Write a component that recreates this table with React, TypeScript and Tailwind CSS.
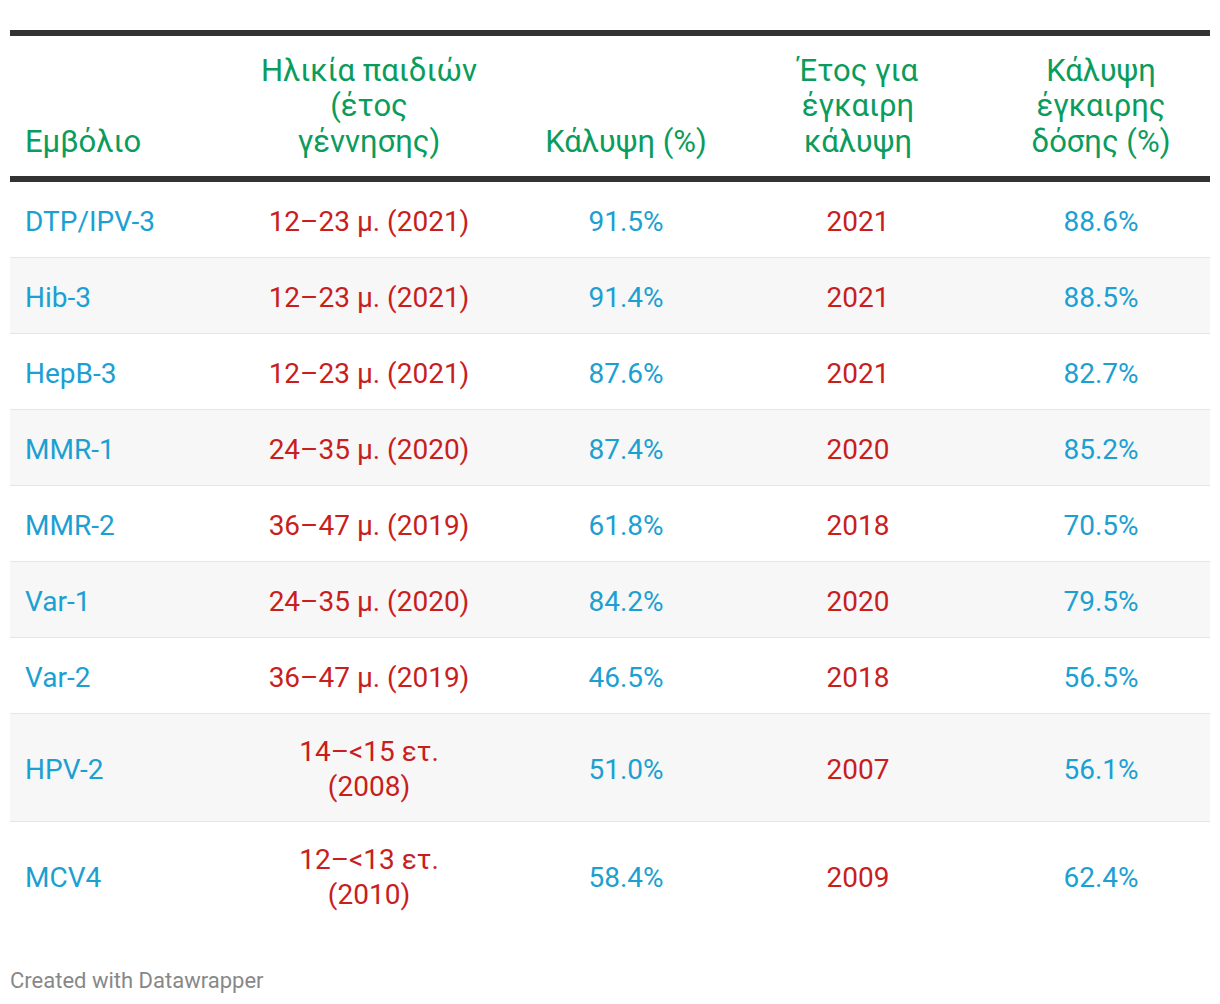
import React from "react";

type Row = {
  v: string;
  age: React.ReactNode;
  cov: string;
  year: string;
  tcov: string;
  tall?: boolean;
};

const rows: Row[] = [
  { v: "DTP/IPV-3", age: "12–23 μ. (2021)", cov: "91.5%", year: "2021", tcov: "88.6%" },
  { v: "Hib-3", age: "12–23 μ. (2021)", cov: "91.4%", year: "2021", tcov: "88.5%" },
  { v: "HepB-3", age: "12–23 μ. (2021)", cov: "87.6%", year: "2021", tcov: "82.7%" },
  { v: "MMR-1", age: "24–35 μ. (2020)", cov: "87.4%", year: "2020", tcov: "85.2%" },
  { v: "MMR-2", age: "36–47 μ. (2019)", cov: "61.8%", year: "2018", tcov: "70.5%" },
  { v: "Var-1", age: "24–35 μ. (2020)", cov: "84.2%", year: "2020", tcov: "79.5%" },
  { v: "Var-2", age: "36–47 μ. (2019)", cov: "46.5%", year: "2018", tcov: "56.5%" },
  {
    v: "HPV-2",
    age: (
      <>
        14–&lt;15 ετ.
        <br />
        (2008)
      </>
    ),
    cov: "51.0%",
    year: "2007",
    tcov: "56.1%",
    tall: true,
  },
  {
    v: "MCV4",
    age: (
      <>
        12–&lt;13 ετ.
        <br />
        (2010)
      </>
    ),
    cov: "58.4%",
    year: "2009",
    tcov: "62.4%",
    tall: true,
  },
];

const BLUE = "text-[#1ba0d2]";
const RED = "text-[#c81e1e]";

export default function App() {
  return (
    <div className="w-[1220px] h-[1004px] bg-white px-[10px] pt-[30px] font-['Roboto',sans-serif] text-[28px] leading-[35px]">
      {/* header */}
      <div className="flex h-[152px] items-end border-t-[6px] border-b-[6px] border-[#333333] pb-[17px] text-[#0a9c5c] text-[31px] leading-[35.5px]">
        <div className="w-[200px] pl-[15px]">Εμβόλιο</div>
        <div className="w-[318px] text-center">
          Ηλικία παιδιών
          <br />
          (έτος
          <br />
          γέννησης)
        </div>
        <div className="w-[196px] text-center">Κάλυψη (%)</div>
        <div className="w-[268px] text-center">
          Έτος για
          <br />
          έγκαιρη
          <br />
          κάλυψη
        </div>
        <div className="w-[218px] text-center">
          Κάλυψη
          <br />
          έγκαιρης
          <br />
          δόσης (%)
        </div>
      </div>
      {/* body */}
      <div className="flex flex-col">
        {rows.map((r, i) => (
          <div
            key={r.v}
            className={`flex items-center pt-[3px] ${
              i === 0 ? "h-[75px]" : r.tall ? "h-[108px] border-t border-[#e6e6e6]" : "h-[76px] border-t border-[#e6e6e6]"
            } ${i % 2 === 1 ? "bg-[#f7f7f7]" : "bg-white"}`}
          >
            <div className={`w-[200px] pl-[15px] ${BLUE}`}>{r.v}</div>
            <div className={`w-[318px] text-center ${RED}`}>{r.age}</div>
            <div className={`w-[196px] text-center ${BLUE}`}>{r.cov}</div>
            <div className={`w-[268px] text-center ${RED}`}>{r.year}</div>
            <div className={`w-[218px] text-center ${BLUE}`}>{r.tcov}</div>
          </div>
        ))}
      </div>
      {/* footer */}
      <div className="mt-[39px] text-[22px] leading-[26px] text-[#888888]">Created with Datawrapper</div>
    </div>
  );
}
